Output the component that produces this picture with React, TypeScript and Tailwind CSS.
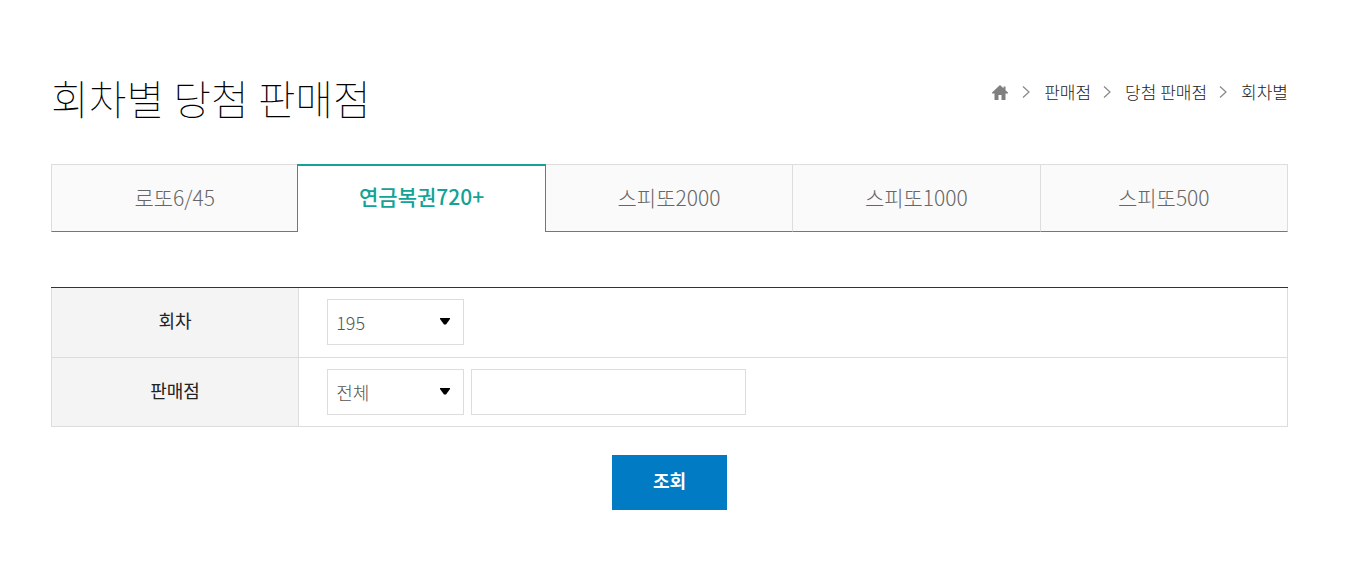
import { useState } from "react";
import type { ReactNode } from "react";

const tabs = ["로또6/45", "연금복권720+", "스피또2000", "스피또1000", "스피또500"];
const crumbs = ["판매점", "당첨 판매점", "회차별"];

function HomeIcon() {
  return (
    <svg viewBox="0 0 16 15" className="h-[15px] w-4" fill="#808080" aria-hidden="true">
      <path d="M8 0 L11.500 3.200 V1.500 H13.500 V5.200 L16 7.600 V8.500 H13.500 V15 H9.500 V10 H6.500 V15 H2.500 V8.500 H0 V7.600 Z" />
    </svg>
  );
}

function Chevron() {
  return (
    <svg viewBox="0 0 8 12" className="h-3 w-2" fill="none" stroke="#888" strokeWidth="1.2" aria-hidden="true">
      <path d="M1 0.500 L7 6 L1 11.500" />
    </svg>
  );
}

function Select({ id, children }: { id: string; children: ReactNode }) {
  return (
    <div className="relative w-[137px]">
      <select
        id={id}
        className="block h-[46px] w-full appearance-none rounded-none border border-[#ddd] bg-white px-2 text-lg font-light text-[#555] outline-none"
      >
        {children}
      </select>
      <svg
        viewBox="0 0 10 7"
        className="pointer-events-none absolute top-[19px] right-3.5 h-[7px] w-[10px]"
        fill="#000"
        aria-hidden="true"
      >
        <path d="M0 0 H10 V1 L6 6.500 H4 L0 1 Z" />
      </svg>
    </div>
  );
}

export default function App() {
  const [active, setActive] = useState(1);
  const [keyword, setKeyword] = useState("");

  return (
    <main className="min-h-screen bg-white pt-[67px] pr-[69px] pb-10 pl-[51px] font-['Noto_Sans_CJK_KR','Noto_Sans',sans-serif] text-[#222]">
      <header className="flex items-start justify-between">
        <h1 className="text-[41px] leading-[60px] font-thin text-black">회차별 당첨 판매점</h1>
        <nav aria-label="위치" className="flex items-center gap-3 pt-[13px] text-[17px] leading-6 font-light text-[#222]">
          <a href="#" aria-label="홈" className="pr-0.5">
            <HomeIcon />
          </a>
          {crumbs.map((crumb) => (
            <span key={crumb} className="flex items-center gap-3.5">
              <Chevron />
              <a href="#">{crumb}</a>
            </span>
          ))}
        </nav>
      </header>

      <div className="mt-[37px] flex" role="tablist">
        {tabs.map((tab, i) => (
          <button
            key={tab}
            type="button"
            role="tab"
            aria-selected={active === i}
            onClick={() => setActive(i)}
            className={
              active === i
                ? "-ml-px h-[68px] w-[calc(20%+1px)] border-x border-t-2 border-[#13a296] bg-white pb-1 text-[21px] font-medium text-[#13a296] first:ml-0 first:w-1/5"
                : "h-[68px] w-1/5 border-t border-r border-b border-t-[#ddd] border-r-[#ddd] border-b-[#13a296] bg-[#fafafa] text-[21px] font-light text-[#666] first:border-l first:border-l-[#ddd]"
            }
          >
            {tab}
          </button>
        ))}
      </div>

      <form onSubmit={(e) => e.preventDefault()}>
        <div className="mt-[55px] border-t border-[#333]">
          <table className="w-full border-collapse border border-t-0 border-[#ddd]">
            <tbody>
              <tr className="h-[69px] border-b border-[#ddd]">
                <th className="w-1/5 border-r border-[#ddd] bg-[#f4f4f4] pb-1 text-lg font-normal">
                  <label htmlFor="round">회차</label>
                </th>
                <td className="px-7">
                  <Select id="round">
                    <option>195</option>
                  </Select>
                </td>
              </tr>
              <tr className="h-[69px]">
                <th className="w-1/5 border-r border-[#ddd] bg-[#f4f4f4] pb-1 text-lg font-normal">
                  <label htmlFor="shop">판매점</label>
                </th>
                <td className="px-7">
                  <div className="flex gap-[7px]">
                    <Select id="shop">
                      <option>전체</option>
                    </Select>
                    <input
                      type="text"
                      aria-label="검색어"
                      value={keyword}
                      onChange={(e) => setKeyword(e.target.value)}
                      className="h-[46px] w-[275px] border border-[#ddd] px-2 text-lg outline-none"
                    />
                  </div>
                </td>
              </tr>
            </tbody>
          </table>
        </div>
        <div className="mt-7 flex justify-center">
          <button type="submit" className="h-[55px] w-[115px] bg-[#007bc4] pb-1 text-lg font-bold text-white">
            조회
          </button>
        </div>
      </form>
    </main>
  );
}
